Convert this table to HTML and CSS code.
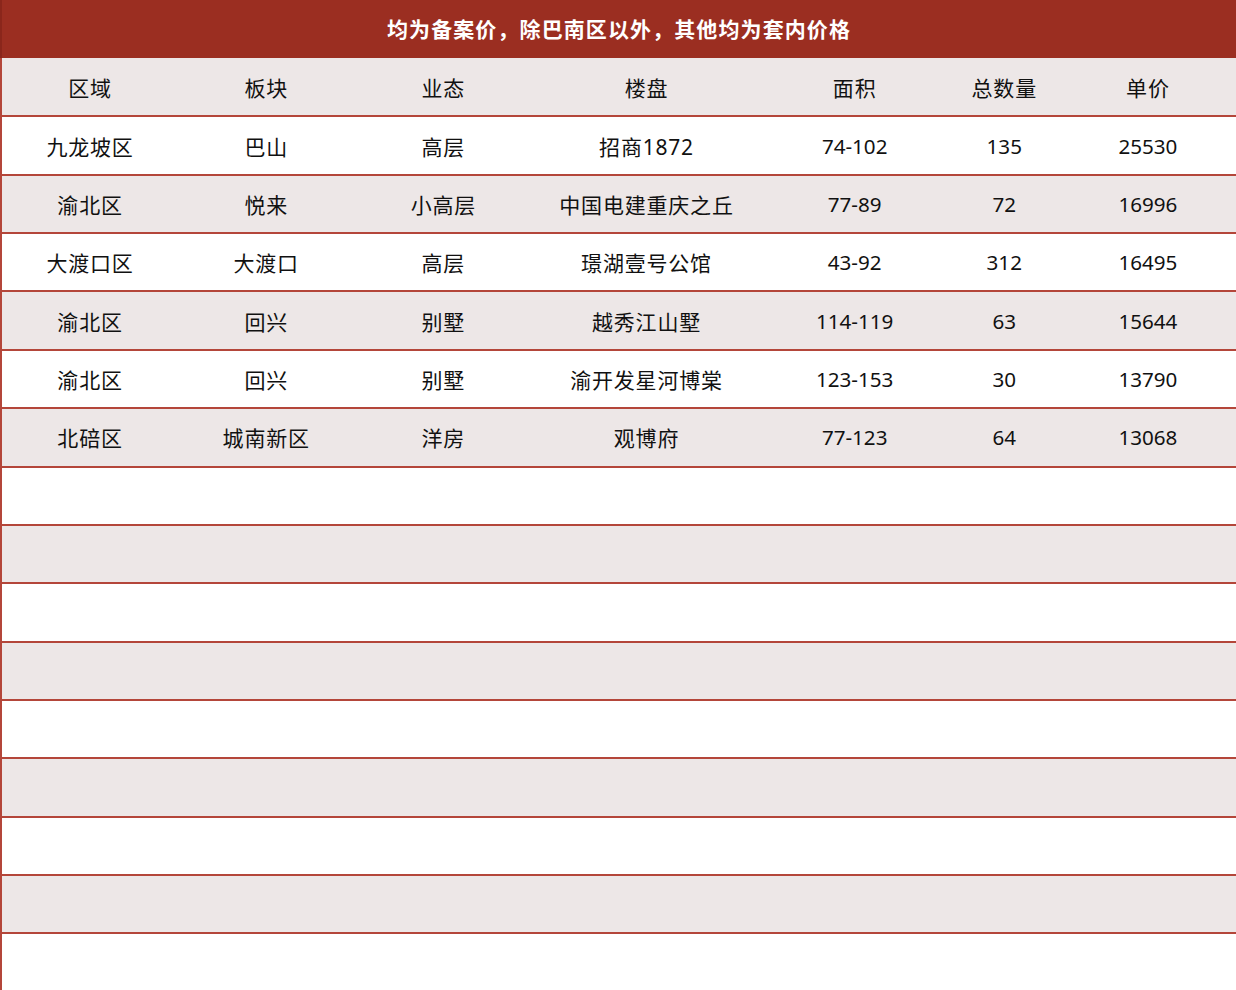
FILE: index.html
```html
<!DOCTYPE html>
<html lang="zh">
<head>
<meta charset="utf-8">
<link rel="stylesheet" href="styles.css">
</head>
<body>
<div class="sheet">
  <div class="title">均为备案价，除巴南区以外，其他均为套内价格</div>
  <table class="grid">
    <colgroup>
      <col class="c1"><col class="c2"><col class="c3"><col class="c4"><col class="c5"><col class="c6"><col class="c7">
    </colgroup>
    <thead>
      <tr><th>区域</th><th>板块</th><th>业态</th><th>楼盘</th><th>面积</th><th>总数量</th><th>单价</th></tr>
    </thead>
    <tbody>
      <tr><td>九龙坡区</td><td>巴山</td><td>高层</td><td>招商1872</td><td>74-102</td><td>135</td><td>25530</td></tr>
      <tr><td>渝北区</td><td>悦来</td><td>小高层</td><td>中国电建重庆之丘</td><td>77-89</td><td>72</td><td>16996</td></tr>
      <tr><td>大渡口区</td><td>大渡口</td><td>高层</td><td>璟湖壹号公馆</td><td>43-92</td><td>312</td><td>16495</td></tr>
      <tr><td>渝北区</td><td>回兴</td><td>别墅</td><td>越秀江山墅</td><td>114-119</td><td>63</td><td>15644</td></tr>
      <tr><td>渝北区</td><td>回兴</td><td>别墅</td><td>渝开发星河博棠</td><td>123-153</td><td>30</td><td>13790</td></tr>
      <tr><td>北碚区</td><td>城南新区</td><td>洋房</td><td>观博府</td><td>77-123</td><td>64</td><td>13068</td></tr>
      <tr><td></td><td></td><td></td><td></td><td></td><td></td><td></td></tr>
      <tr><td></td><td></td><td></td><td></td><td></td><td></td><td></td></tr>
      <tr><td></td><td></td><td></td><td></td><td></td><td></td><td></td></tr>
      <tr><td></td><td></td><td></td><td></td><td></td><td></td><td></td></tr>
      <tr><td></td><td></td><td></td><td></td><td></td><td></td><td></td></tr>
      <tr><td></td><td></td><td></td><td></td><td></td><td></td><td></td></tr>
      <tr><td></td><td></td><td></td><td></td><td></td><td></td><td></td></tr>
      <tr><td></td><td></td><td></td><td></td><td></td><td></td><td></td></tr>
      <tr><td></td><td></td><td></td><td></td><td></td><td></td><td></td></tr>
    </tbody>
  </table>
</div>
</body>
</html>
```

FILE: styles.css
```css
html, body {
  margin: 0;
  padding: 0;
  background: #ffffff;
  overflow: hidden;
}
.sheet {
  width: 1236px;
  font-family: "Noto Sans", "Noto Sans CJK SC", sans-serif;
  color: #111111;
}
.title {
  height: 58px;
  box-sizing: border-box;
  background: #9b2e21;
  color: #ffffff;
  font-family: "Noto Sans CJK SC", sans-serif;
  font-weight: 700;
  font-size: 21px;
  letter-spacing: 1.1px;
  display: flex;
  align-items: center;
  justify-content: center;
  padding-bottom: 2px;
  border-left: 2px solid #8a261b;
}
.grid {
  width: 1236px;
  border-collapse: collapse;
  table-layout: fixed;
  border-left: 2px solid #b4463a;
}
.c1 { width: 177px; }
.c2 { width: 176px; }
.c3 { width: 178px; }
.c4 { width: 228px; }
.c5 { width: 188px; }
.c6 { width: 111px; }
.c7 { width: 176px; }
.grid th,
.grid td {
  height: 58.36px;
  box-sizing: border-box;
  padding: 0;
  text-align: center;
  vertical-align: middle;
  font-size: 21px;
  font-weight: 400;
  letter-spacing: 0.8px;
  border-bottom: 2px solid #b4463a;
  white-space: nowrap;
}
.grid td:nth-child(n+5) {
  letter-spacing: 0;
  font-size: 20.6px;
}
.grid thead tr {
  background: #ede7e7;
}
.grid tbody tr:nth-child(even) {
  background: #ede7e7;
}
.grid tbody tr:nth-child(odd) {
  background: #ffffff;
}
```
